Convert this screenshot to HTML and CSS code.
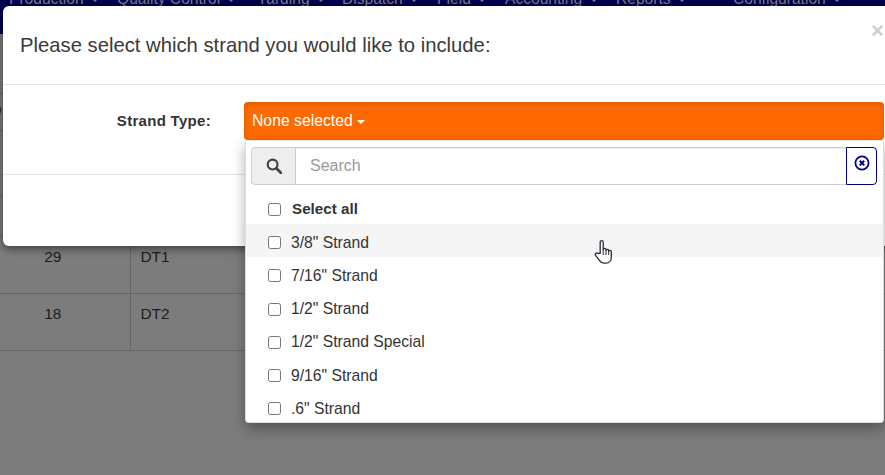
FILE: index.html
```html
<!DOCTYPE html>
<html lang="en">
<head>
<meta charset="utf-8">
<title>Strand selection</title>
<link rel="stylesheet" href="styles.css">
</head>
<body>
<div class="page">
  <nav class="navbar">
    <span class="nav-item nav-production">Production <i class="caret"></i></span>
    <span class="nav-item nav-quality">Quality Control <i class="caret"></i></span>
    <span class="nav-item nav-yarding">Yarding <i class="caret"></i></span>
    <span class="nav-item nav-dispatch">Dispatch <i class="caret"></i></span>
    <span class="nav-item nav-field">Field <i class="caret"></i></span>
    <span class="nav-item nav-accounting">Accounting <i class="caret"></i></span>
    <span class="nav-item nav-reports">Reports <i class="caret"></i></span>
    <span class="nav-item">Configuration <i class="caret"></i></span>
  </nav>
  <table class="data-table">
    <tbody>
      <tr class="row-a"><td class="col-num"></td><td></td></tr>
      <tr class="row-b"><td class="col-num col-stub">p</td><td></td></tr>
      <tr class="row-c"><td class="col-num"></td><td></td></tr>
      <tr class="row-d"><td class="col-num"></td><td></td></tr>
      <tr><td class="col-num">29</td><td>DT1</td></tr>
      <tr><td class="col-num">18</td><td>DT2</td></tr>
    </tbody>
  </table>
</div>

<section class="modal">
  <header class="modal-header">
    <h4 class="modal-title">Please select which strand you would like to include:</h4>
    <span class="close">×</span>
  </header>
  <div class="modal-body">
    <label class="field-label">Strand Type:</label>
    <div class="select-wrap">
      <button class="select-btn" type="button">None selected <i class="caret caret-white"></i></button>
      <div class="menu">
        <div class="search-row">
          <span class="search-addon">
            <svg class="search-icon" viewBox="0 0 16 16" width="16" height="16" aria-hidden="true"><circle cx="6.6" cy="6.6" r="4.9" fill="none" stroke="#444" stroke-width="2.2"/><path d="M10.3 10.3 14.8 14.8" stroke="#444" stroke-width="2.8" stroke-linecap="round"/></svg>
          </span>
          <input class="search-input" type="text" placeholder="Search">
          <button class="clear-btn" type="button" aria-label="Clear">
            <svg viewBox="0 0 16 16" width="16" height="16" aria-hidden="true"><circle cx="8" cy="8" r="6.6" fill="none" stroke="#000090" stroke-width="1.8"/><path d="M5.8 5.8 10.2 10.2M10.2 5.8 5.8 10.2" stroke="#000090" stroke-width="2"/></svg>
          </button>
        </div>
        <ul class="options">
          <li class="option option-all"><span class="box"></span>Select all</li>
          <li class="option option-hover"><span class="box"></span>3/8" Strand</li>
          <li class="option"><span class="box"></span>7/16" Strand</li>
          <li class="option"><span class="box"></span>1/2" Strand</li>
          <li class="option"><span class="box"></span>1/2" Strand Special</li>
          <li class="option"><span class="box"></span>9/16" Strand</li>
          <li class="option"><span class="box"></span>.6" Strand</li>
        </ul>
      </div>
    </div>
  </div>
  <footer class="modal-footer"></footer>
</section>

<svg class="cursor" viewBox="0 0 20 26" width="20" height="26" aria-hidden="true"><path d="M6.2 14.4V3.2c0-2.2 3-2.2 3 0v7.6c0-1.8 2.8-1.8 2.8 0v.8c0-1.7 2.7-1.7 2.7 0v.9c0-1.6 2.6-1.6 2.6 0v5.8c0 3-1.8 5.9-5.3 5.9H10c-2 0-3.2-1-4.2-2.4L1.6 16.400c-1-1.600 1-3.200 2.400-1.900z" fill="#fff" stroke="#2b2b38" stroke-width="1.300" stroke-linejoin="round"/><path d="M9.200 11v5M12 11.500v4.500M14.700 12.400v3.600" stroke="#2b2b38" stroke-width="1"/></svg>
</body>
</html>
```
FILE: styles.css
```css
* { box-sizing: border-box; }
html, body { margin: 0; height: 100%; }
body {
  width: 885px;
  height: 475px;
  overflow: hidden;
  position: relative;
  font-family: "Liberation Sans", Arial, sans-serif;
  font-size: 14px;
  color: #333;
  background: #7c7c7c;
}
.page { height: 475px; }
.navbar {
  height: 34px;
  background: #00004f;
  display: flex;
  padding-left: 9px;
  color: #7c7c86;
  font-size: 15.6px;
  line-height: 16px;
}
.nav-item { margin-top: -9px; white-space: nowrap; }
.nav-production { width: 108px; }
.nav-quality { width: 140px; }
.nav-yarding { width: 85px; }
.nav-dispatch { width: 95px; }
.nav-field { width: 68px; }
.nav-accounting { width: 111px; }
.nav-reports { width: 117px; }
.caret {
  display: inline-block;
  width: 0;
  height: 0;
  margin-left: 3px;
  vertical-align: middle;
  border-top: 4px solid currentColor;
  border-left: 4.5px solid transparent;
  border-right: 4.5px solid transparent;
}
.caret-white { margin-left: 0; margin-top: 2px; }
.data-table {
  width: 100%;
  border-collapse: collapse;
  color: #1d1d1d;
  font-size: 15.4px;
}
.data-table td {
  height: 57px;
  padding: 10px 10px;
  vertical-align: top;
  line-height: 20px;
  border-bottom: 1px solid #676767;
  border-right: 1px solid #676767;
}
.data-table td:last-child { border-right: 0; }
.data-table .col-num { width: 130px; text-align: center; padding-right: 24px; padding-left: 0; }
.data-table .row-a td { height: 59px; }
.data-table .row-b td { height: 37px; padding-top: 5px; padding-bottom: 0; }
.data-table .row-c td { height: 65px; }
.data-table .row-d td { height: 41px; }
.data-table .col-stub { text-align: left; padding-left: 0; text-indent: -7px; }
.modal {
  position: absolute;
  left: 3px;
  top: 6px;
  width: 890px;
  height: 240px;
  background: #fff;
  border-radius: 6px;
  box-shadow: 0 3px 9px rgba(0,0,0,.5);
  display: flex;
  flex-direction: column;
}
.modal-header {
  height: 79px;
  border-bottom: 1px solid #e5e5e5;
  padding: 29px 0 0 17px;
  position: relative;
}
.modal-title {
  margin: 0;
  font-weight: 400;
  font-size: 20.25px;
  line-height: 20px;
  color: #3a3a3a;
}
.close {
  position: absolute;
  left: 868px;
  top: 12px;
  font-size: 22px;
  line-height: 26px;
  font-weight: 700;
  color: #cfcfcf;
}
.modal-body {
  height: 90px;
  border-bottom: 1px solid #e5e5e5;
  display: flex;
  padding-top: 17px;
}
.field-label {
  width: 208px;
  text-align: right;
  font-weight: 700;
  font-size: 15px;
  line-height: 37px;
  letter-spacing: .3px;
}
.select-wrap {
  margin-left: 33px;
  width: 640px;
  position: relative;
}
.select-btn {
  display: block;
  width: 100%;
  height: 38px;
  border: 0;
  border-radius: 4px;
  background: #ff6a00;
  box-shadow: inset 0 3px 5px rgba(0,0,0,.125);
  color: #fff;
  font: inherit;
  font-size: 15.75px;
  text-align: left;
  padding: 0 0 1px 8px;
}
.menu {
  position: absolute;
  top: 38px;
  left: 1px;
  width: 639px;
  height: 283px;
  background: #fff;
  border-radius: 0 0 4px 4px;
  border: 1px solid #ddd;
  border-top: 1px solid #e6e6e6;
  box-shadow: 0 6px 14px rgba(0,0,0,.32);
  overflow: hidden;
  z-index: 2;
}
.search-row {
  display: flex;
  height: 38px;
  margin: 6px 6px 0 5px;
}
.search-addon {
  width: 45px;
  background: #eee;
  border: 1px solid #ccc;
  border-radius: 4px 0 0 4px;
  display: flex;
  align-items: center;
  justify-content: center;
}
.search-input {
  flex: 1;
  min-width: 0;
  border: 1px solid #ccc;
  border-left: 0;
  border-right: 0;
  padding: 0 14px;
  font: inherit;
  font-size: 16px;
  box-shadow: inset 0 1px 1px rgba(0,0,0,.075);
  outline: 0;
}
.search-input::placeholder { color: #999; opacity: 1; }
.clear-btn {
  width: 31px;
  padding: 0 0 6px;
  background: #fff;
  border: 1px solid #00008b;
  border-radius: 0 4px 4px 0;
  display: flex;
  align-items: center;
  justify-content: center;
}
.options {
  list-style: none;
  margin: 6px 0 0;
  padding: 0;
}
.option {
  height: 33.2px;
  display: flex;
  align-items: center;
  padding: 4px 0 0 22px;
  font-size: 15.7px;
  color: #333;
}
.option-all { font-weight: 700; font-size: 15.2px; padding-top: 2px; }
.option-all .box { margin-right: 11px; margin-top: 2px; }
.option-hover { background: #f5f5f5; }
.box {
  width: 13px;
  height: 13px;
  flex: none;
  margin-right: 10px;
  background: #fff;
  border: 1px solid #767676;
  border-radius: 2.500px;
}
.cursor {
  position: absolute;
  left: 594px;
  top: 239px;
  z-index: 5;
}
```
